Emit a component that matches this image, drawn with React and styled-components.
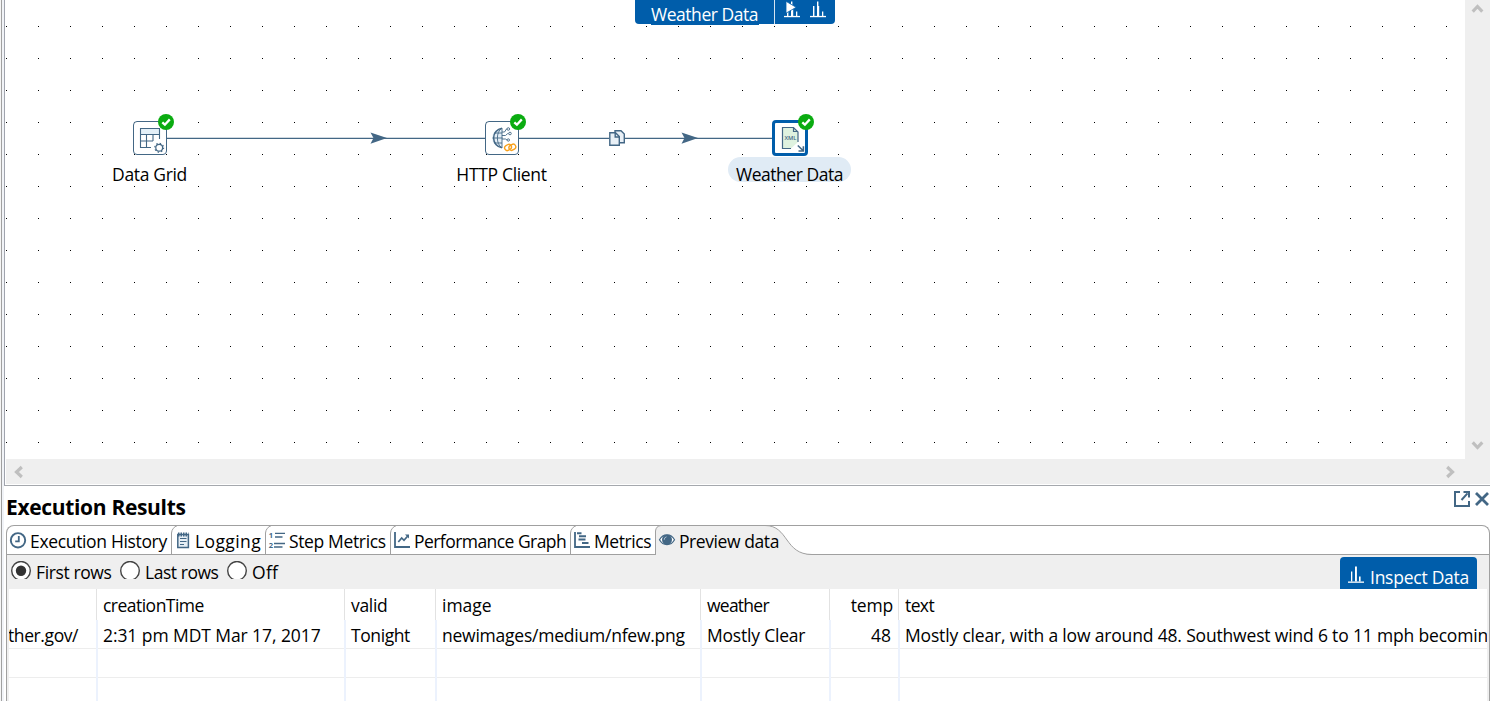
import React from 'react';
import styled, { createGlobalStyle, css } from 'styled-components';

const ink = '#436785';
const blue = '#005daa';
const line = '#a0a0a0';
const face = '#efefef';

const Global = createGlobalStyle`
  * { box-sizing: border-box; }
  body {
    margin: 0;
    background: #fff;
    color: #000;
    overflow: hidden;
    font-family: "Open Sans", "Noto Sans", sans-serif;
    font-size: 17.5px;
  }
  svg { display: block; flex: none; overflow: visible; }
`;

const Text = styled.span`
  white-space: nowrap;
  letter-spacing: ${p => p.$track || 0}px;
`;

const Window = styled.div`
  display: flex;
  width: 1490px;
  height: 701px;
  overflow: hidden;
`;

const Sash = styled.div`
  flex: none;
  width: 4px;
  border-left: 1px solid #f5f5f5;
  background: linear-gradient(90deg, ${line} 1px, #f1f3f7 1px);
`;

const Main = styled.main`
  flex: 1;
  min-width: 0;
  display: flex;
  flex-direction: column;
`;

/* ---------- graph editor ---------- */

const Editor = styled.section`
  flex: none;
  height: 486px;
  display: grid;
  grid-template: 459px 25px / 1460px 25px;
  border-left: 1px solid #a0a4ae;
  border-bottom: 1px solid #a5a8ad;
`;

const Canvas = styled.div`
  position: relative;
  background: conic-gradient(from 270deg at 1px 1px, #000 90deg, transparent 0) 1px 26px / 32px 32px;
`;

const ScrollTrack = styled.div`
  display: flex;
  align-items: center;
  justify-content: space-between;
  background: ${face};
  ${p => p.$vertical
    ? css`flex-direction: column; padding: 4px 0 9px;`
    : css`margin-left: 1px; padding: 0 10px 0 8px;`}
`;

const Corner = styled.div`
  background: ${face};
`;

const Banner = styled.div`
  position: absolute;
  left: 630px;
  top: 0;
  display: flex;
  width: 200px;
  height: 24px;
  border-radius: 0 0 4px 4px;
  background: ${blue};
  color: #fff;
`;

const BannerTitle = styled.div`
  width: 140px;
  padding-left: 16px;
  border-right: 1px solid #d5e4f1;
  ${Text} {
    display: block;
    width: 108px;
    height: 25px;
    line-height: 29px;
    background: ${blue};
  }
`;

const BannerTools = styled.div`
  display: flex;
  gap: 9px;
  padding: 1px 0 0 9px;
`;

const Hops = styled.svg`
  position: absolute;
  left: -5px;
  top: 0;
`;

const Step = styled.div`
  position: absolute;
  left: ${p => p.$x - 70}px;
  top: ${p => p.$y}px;
  width: 130px;
  display: flex;
  flex-direction: column;
  align-items: center;
`;

const StepTile = styled.div`
  position: relative;
  width: ${p => (p.$selected ? 36 : 34)}px;
  height: ${p => (p.$selected ? 36 : 34)}px;
  margin: ${p => (p.$selected ? '0 0 1px' : '1px 0 2px')};
  border: ${p => (p.$selected ? `3px solid ${blue}` : `1px solid ${ink}`)};
  border-radius: 4px;
  background: #fff;
`;

const StepArt = styled.svg`
  position: absolute;
  left: ${p => (p.$selected ? -2 : -1)}px;
  top: ${p => (p.$selected ? -2 : -1)}px;
`;

const Badge = styled.svg`
  position: absolute;
  right: ${p => (p.$selected ? -9 : -8)}px;
  top: ${p => (p.$selected ? -9 : -8)}px;
`;

const StepLabel = styled.div`
  height: 25px;
  margin-right: 1px;
  padding: 0 8px;
  line-height: 35px;
  border-radius: 13px;
  background: ${p => (p.$selected ? '#e0ebf5' : 'transparent')};
`;

/* ---------- results panel ---------- */

const Results = styled.section`
  flex: 1;
  min-height: 0;
  display: flex;
  flex-direction: column;
  padding-left: 2px;
`;

const ResultsHead = styled.header`
  flex: none;
  display: flex;
  justify-content: space-between;
  height: 39px;
`;

const Heading = styled.h2`
  margin: 0;
  font-size: 21px;
  line-height: 42px;
  font-weight: 700;
  letter-spacing: -0.33px;
`;

const HeadTools = styled.div`
  display: flex;
  gap: 6px;
  padding: 5px 1px 0 0;
`;

const Folder = styled.div`
  flex: 1;
  min-height: 0;
  display: flex;
  flex-direction: column;
  border: solid ${line};
  border-width: 1px 1px 0;
  border-radius: 8px 8px 0 0;
`;

const TabStrip = styled.nav`
  flex: none;
  display: flex;
  height: 29px;
  border-bottom: 1px solid ${line};
`;

const Tab = styled.div`
  position: relative;
  display: flex;
  width: ${p => p.$width}px;
  padding: 6px 0 0 ${p => p.$indent}px;
  ${Text} {
    position: relative;
    margin: -4px 0 0 ${p => p.$gap || 3}px;
    line-height: 27px;
  }
  > svg { position: relative; }
`;

const TabEdge = styled.svg`
  && { position: absolute; left: 0; top: -1px; }
`;

const Options = styled.div`
  flex: none;
  display: flex;
  justify-content: space-between;
  height: 34px;
  padding-right: 12px;
  background: ${face};
`;

const RadioGroup = styled.div`
  display: flex;
  height: 34px;
  padding-left: 4px;
`;

const Radio = styled.label`
  display: flex;
  width: ${p => p.$width}px;
  padding-top: 6px;
  ${Text} { margin: -6px 0 0 4px; line-height: 34px; }
`;

const RadioDot = styled.svg`
  && { overflow: hidden; }
`;

const InspectButton = styled.button`
  display: flex;
  width: 137px;
  height: 32px;
  margin-top: 2px;
  padding: 9px 0 0 8px;
  border: 0;
  border-radius: 4px 4px 0 0;
  background: ${blue};
  color: #fff;
  font: inherit;
  text-align: left;
  ${Text} { margin: -7px 0 0 5px; line-height: 37px; }
`;

const Frame = styled.div`
  flex: 1;
  min-height: 0;
  padding: 0 2px;
  background: ${face};
`;

const Table = styled.div`
  height: 112px;
  display: grid;
  grid-template: 31px 29px 29px 23px / 88px 248px 91px 265px 129px 69px 588px;
  background: #fff;
`;

const HeadCell = styled.div`
  padding: 0 5px 0 6px;
  line-height: 33px;
  text-align: ${p => (p.$right ? 'right' : 'left')};
  border-right: ${p => (p.$last ? 0 : '1px solid #e2e2e2')};
  white-space: nowrap;
`;

const Cell = styled.div`
  overflow: hidden;
  padding-left: ${p => (p.$first ? 0 : 5)}px;
  padding-right: ${p => (p.$right ? 7 : 0)}px;
  line-height: 31px;
  text-align: ${p => (p.$right ? 'right' : 'left')};
  text-indent: ${p => (p.$first ? -1 : 0)}px;
  border-left: ${p => (p.$first ? 0 : '1px solid #ecf2fd')};
  border-right: ${p => (p.$last ? 0 : '1px solid #ecf2fd')};
  background: linear-gradient(#ededed, #ededed) 0 28px / 100% 1px no-repeat;
  white-space: nowrap;
`;

/* ---------- drawings ---------- */

const Chevron = ({ d, w, h }) => (
  <svg width={w} height={h}><path d={d} fill="none" stroke="#bfbfbf" strokeWidth="3.2" /></svg>
);

const BarsIcon = ({ play }) => (
  <svg width="17" height="17" viewBox="0 0 17 17" fill="#fff">
    <rect x="0" y="14.9" width="16" height="1.3" />
    <rect x="3" y="5" width="1.4" height="10" />
    <rect x="7" y="0.5" width="1.4" height="14.5" />
    <rect x="8" y="5" width="1.2" height="10" />
    <rect x="12" y="10.5" width="1.3" height="4.5" />
    {play && <path d="M2 0.3V12.2L12.2 6.3Z" stroke={blue} strokeWidth="0.8" />}
  </svg>
);

const InspectIcon = () => (
  <svg width="17" height="18" viewBox="0 0 17 18" fill="#fff">
    <rect x="0" y="15.5" width="16" height="1.3" />
    <rect x="3" y="5.5" width="1.3" height="10" />
    <rect x="7" y="0.5" width="1.9" height="15" />
    <rect x="11" y="10.5" width="1.6" height="5" />
  </svg>
);

const Check = ({ selected }) => (
  <Badge $selected={selected} width="16" height="16" viewBox="0 0 16 16">
    <circle cx="8" cy="8" r="8" fill="#0bac11" />
    <path d="M4.3 8.3L6.9 10.7L11.8 5.4" fill="none" stroke="#fff" strokeWidth="2.3" />
  </Badge>
);

const GridArt = () => (
  <StepArt width="34" height="34" fill="none" stroke={ink}>
    <rect x="8" y="8" width="19" height="5.5" fill="#e4f0f8" stroke="none" />
    <path d="M18 26.5H7.5V7.5H26.5V18M7.5 13.5H26.5M7.5 20H20M13.5 13.5V26.5M20 13.5V20" strokeWidth="1.1" />
    <circle cx="26.2" cy="26.7" r="4.6" fill="#fff" stroke="#fff" strokeWidth="3" />
    <circle cx="26.2" cy="26.7" r="3.4" strokeWidth="1.2" />
    <circle cx="26.2" cy="26.7" r="4.4" strokeWidth="1.2" strokeDasharray="1.4 2.05" />
  </StepArt>
);

const HttpArt = () => (
  <StepArt width="34" height="34" fill="none" stroke={ink} strokeWidth="0.9">
    <path d="M17 7A10 10 0 0 0 17 27Z" fill="#e4eef6" stroke="none" />
    <path d="M17 7.3A9.8 9.8 0 0 0 17 26.7" strokeWidth="1.5" />
    <path d="M17 7V27M7.5 17H17.5M9 12H17M9 22H17" />
    <path d="M16.5 7.5C11 11 11 23 16.5 26.5" />
    <path d="M17 11H19.5L21.5 8H22M17 14.5H20.5L22.5 12.7H23.5M17 18H20.5L22 19" />
    <circle cx="23.3" cy="8" r="1.3" />
    <circle cx="25" cy="12.5" r="1.3" />
    <circle cx="23.3" cy="19" r="1.2" />
    <g stroke="#f8a11c" strokeWidth="1.4">
      <rect x="19.6" y="23.9" width="7" height="5.2" rx="2.6" transform="rotate(-30 23 26.6)" />
      <rect x="23.9" y="23.6" width="7" height="5.2" rx="2.6" transform="rotate(-30 27.5 26.3)" />
    </g>
  </StepArt>
);

const XmlText = styled.text`
  font: 600 6px "Open Sans", sans-serif;
  fill: ${ink};
  stroke: none;
`;

const XmlArt = () => (
  <StepArt $selected width="34" height="34" fill="none" stroke={ink} strokeWidth="1.2">
    <path d="M9.5 6.5H20.5L25 11V21L18 27.5H9.5Z" fill="#dff2df" stroke="none" />
    <path d="M18 27.5H9.5V6.5H20.5L25 11V21M20.5 6.5V10.5H25" />
    <XmlText x="11.5" y="19" textLength="12" lengthAdjust="spacingAndGlyphs">XML</XmlText>
    <path d="M24.8 24.5L30 29.5M30.4 25.3V30H25.5" strokeWidth="1.6" />
  </StepArt>
);

const ClockIcon = () => (
  <svg width="17" height="17" fill="none" stroke={ink}>
    <circle cx="8" cy="8.3" r="7.2" strokeWidth="1.9" />
    <path d="M8.8 4V9.3H5.2" strokeWidth="1.8" />
  </svg>
);

const NotepadIcon = () => (
  <svg width="13" height="17" fill="none" stroke={ink}>
    <rect x="0.8" y="2.5" width="10.6" height="13" strokeWidth="1.5" fill="#e6eef4" />
    <path d="M3 6.5H9.5M3 9.5H9.5M3 12.5H7" />
    <path d="M1 2.5H11.5" strokeWidth="4" strokeDasharray="1.5 1" />
  </svg>
);

const StepsText = styled.text`
  font: 700 7.5px "Open Sans", sans-serif;
  fill: ${ink};
`;

const StepsIcon = () => (
  <svg width="17" height="17">
    <StepsText x="-0.3" y="5.7">1</StepsText>
    <StepsText x="-0.3" y="16">2</StepsText>
    <g stroke={ink} strokeWidth="1.3">
      <path d="M6 1.3H16M6 5H13.5M5 11.5H16M5 15H13.5" />
    </g>
  </svg>
);

const GraphIcon = () => (
  <svg width="17" height="17" fill="none" stroke={ink}>
    <path d="M1 0V15H16" strokeWidth="1.8" />
    <path d="M4.3 10L7.7 6L10 8.3L14 3.8" strokeWidth="1.7" />
    <path d="M11 2.5H15V6.5Z" fill={ink} stroke="none" />
  </svg>
);

const MetricsIcon = () => (
  <svg width="17" height="17" fill="none" stroke={ink}>
    <path d="M1 0V15H16" strokeWidth="1.8" />
    <path d="M3 1.3H7.5M5 4.3H12M4.5 7.6H11.5M8 11H14.5" strokeWidth="2" />
  </svg>
);

const EyeIcon = () => (
  <svg width="17" height="14" stroke={ink}>
    <path d="M0.5 7.8C4 1.3 12 1.3 15.5 7.8C12 14.3 4 14.3 0.5 7.8Z" fill="#fff" strokeWidth="1.2" />
    <circle cx="8" cy="7.8" r="5" fill={ink} stroke="none" />
    <path d="M5.2 7.8A3 3 0 0 1 7.5 4.8" fill="none" stroke="#b9cad8" strokeWidth="0.9" />
  </svg>
);

const DetachIcon = () => (
  <svg width="16" height="16" fill="none" stroke={ink} strokeWidth="2">
    <path d="M6 1H1V15H15V10" />
    <path d="M7.5 9L13.5 2.3M9.5 1H15V6.5" />
  </svg>
);

const CloseIcon = () => (
  <svg width="13" height="16" fill="none" stroke={ink} strokeWidth="2.8">
    <path d="M0 2L12 14M12 2L0 14" />
  </svg>
);

const RadioMark = ({ on }) => (
  <RadioDot width="21" height="18">
    <circle cx="10" cy="9.8" r="9.3" fill="#fff" stroke="#444" strokeWidth="1.4" />
    {on && <circle cx="10" cy="9.8" r="5.2" fill="#333" />}
  </RadioDot>
);

const Edge = () => (
  <TabEdge width="8" height="30"><path d="M0.5 30V8Q1 2.5 6.5 0.5" fill="none" stroke={line} /></TabEdge>
);

const ActiveEdge = () => (
  <TabEdge width="158" height="31">
    <path d="M0.5 31V6Q1 1 6 0.5H110C134 0.5 129 29.5 157 29.5V31Z" fill={face} />
    <path d="M0.5 30V6Q1 1 6 0.5H110C134 0.5 129 29.5 157 29.5" fill="none" stroke={line} />
  </TabEdge>
);

/* ---------- data ---------- */

const steps = [
  { x: 150, name: 'Data Grid', track: -0.35, art: <GridArt /> },
  { x: 502, name: 'HTTP Client', track: -0.32, art: <HttpArt /> },
  { x: 790, name: 'Weather Data', track: -0.46, art: <XmlArt />, selected: true },
];

const tabs = [
  { name: 'Execution History', width: 164, track: -0.34, icon: <ClockIcon />, indent: 3 },
  { name: 'Logging', width: 94, track: 0.4, icon: <NotepadIcon />, indent: 6, gap: 5 },
  { name: 'Step Metrics', width: 125, track: -0.36, icon: <StepsIcon />, indent: 4, gap: 3 },
  { name: 'Performance Graph', width: 180, track: -0.55, icon: <GraphIcon />, indent: 4 },
  { name: 'Metrics', width: 85, track: -0.4, icon: <MetricsIcon />, indent: 4 },
  { name: 'Preview data', width: 158, track: -0.42, icon: <EyeIcon />, indent: 4, active: true },
];

const columns = [
  { name: '', value: 'ther.gov/', valueTrack: -0.4 },
  { name: 'creationTime', track: -0.52, value: '2:31 pm MDT Mar 17, 2017', valueTrack: -0.08 },
  { name: 'valid', track: -0.3, value: 'Tonight', valueTrack: -0.42 },
  { name: 'image', track: 0, value: 'newimages/medium/nfew.png', valueTrack: -0.23 },
  { name: 'weather', track: -0.75, value: 'Mostly Clear', valueTrack: -0.2 },
  { name: 'temp', track: -0.2, value: '48', right: true },
  { name: 'text', track: -0.6, value: 'Mostly clear, with a low around 48. Southwest wind 6 to 11 mph becomin', valueTrack: -0.17 },
];

export default function App() {
  const last = columns.length - 1;
  return (
    <Window>
      <Global />
      <Sash />
      <Main>
        <Editor>
          <Canvas>
            <Hops width="860" height="200">
              <path d="M167 138.4H485M519 138.4H609M625 138.4H773" stroke={ink} strokeWidth="1.2" />
              <path d="M370.5 132.5L387 138L370.5 143.8L373.5 138ZM681.5 132.5L698 138L681.5 143.8L684.5 138Z" fill={ink} />
              <g fill="#e9f0f6" stroke={ink} strokeWidth="1.4">
                <path d="M615 130.8H621L624.3 134V142.8H615Z" />
                <path d="M609.8 132.8H615.5L619.3 136.5V145.3H609.8Z" />
                <path d="M615.2 133V137H619.2" fill="none" />
              </g>
            </Hops>
            {steps.map(s => (
              <Step key={s.name} $x={s.x} $y={120}>
                <StepTile $selected={s.selected}>
                  {s.art}
                  <Check selected={s.selected} />
                </StepTile>
                <StepLabel $selected={s.selected}><Text $track={s.track}>{s.name}</Text></StepLabel>
              </Step>
            ))}
            <Banner>
              <BannerTitle><Text $track={-0.46}>Weather Data</Text></BannerTitle>
              <BannerTools><BarsIcon play /><BarsIcon /></BannerTools>
            </Banner>
          </Canvas>
          <ScrollTrack $vertical>
            <Chevron w={11} h={9} d="M0.7 7.6L5.5 2.5L10.3 7.6" />
            <Chevron w={11} h={9} d="M0.7 1.4L5.5 6.5L10.3 1.4" />
          </ScrollTrack>
          <ScrollTrack>
            <Chevron w={9} h={12} d="M7.8 1L2.5 6L7.8 11" />
            <Chevron w={9} h={12} d="M1.2 1L6.5 6L1.2 11" />
          </ScrollTrack>
          <Corner />
        </Editor>
        <Results>
          <ResultsHead>
            <Heading>Execution Results</Heading>
            <HeadTools><DetachIcon /><CloseIcon /></HeadTools>
          </ResultsHead>
          <Folder>
            <TabStrip>
              {tabs.map((t, i) => (
                <Tab key={t.name} $width={t.width} $indent={t.indent} $gap={t.gap}>
                  {t.active ? <ActiveEdge /> : i > 0 && <Edge />}
                  {t.icon}
                  <Text $track={t.track}>{t.name}</Text>
                </Tab>
              ))}
            </TabStrip>
            <Options>
              <RadioGroup>
                <Radio $width={109}><RadioMark on /><Text $track={-0.38}>First rows</Text></Radio>
                <Radio $width={107}><RadioMark /><Text $track={-0.45}>Last rows</Text></Radio>
                <Radio $width={60}><RadioMark /><Text $track={0.3}>Off</Text></Radio>
              </RadioGroup>
              <InspectButton><InspectIcon /><Text $track={-0.25}>Inspect Data</Text></InspectButton>
            </Options>
            <Frame>
              <Table>
                {columns.map((c, i) => (
                  <HeadCell key={i} $right={c.right} $last={i === last}>
                    <Text $track={c.track}>{c.name}</Text>
                  </HeadCell>
                ))}
                {[0, 1, 2].map(r => columns.map((c, i) => (
                  <Cell key={`${r}-${i}`} $first={i === 0} $right={c.right} $last={i === last}>
                    {r === 0 && <Text $track={c.valueTrack}>{c.value}</Text>}
                  </Cell>
                )))}
              </Table>
            </Frame>
          </Folder>
        </Results>
      </Main>
    </Window>
  );
}
